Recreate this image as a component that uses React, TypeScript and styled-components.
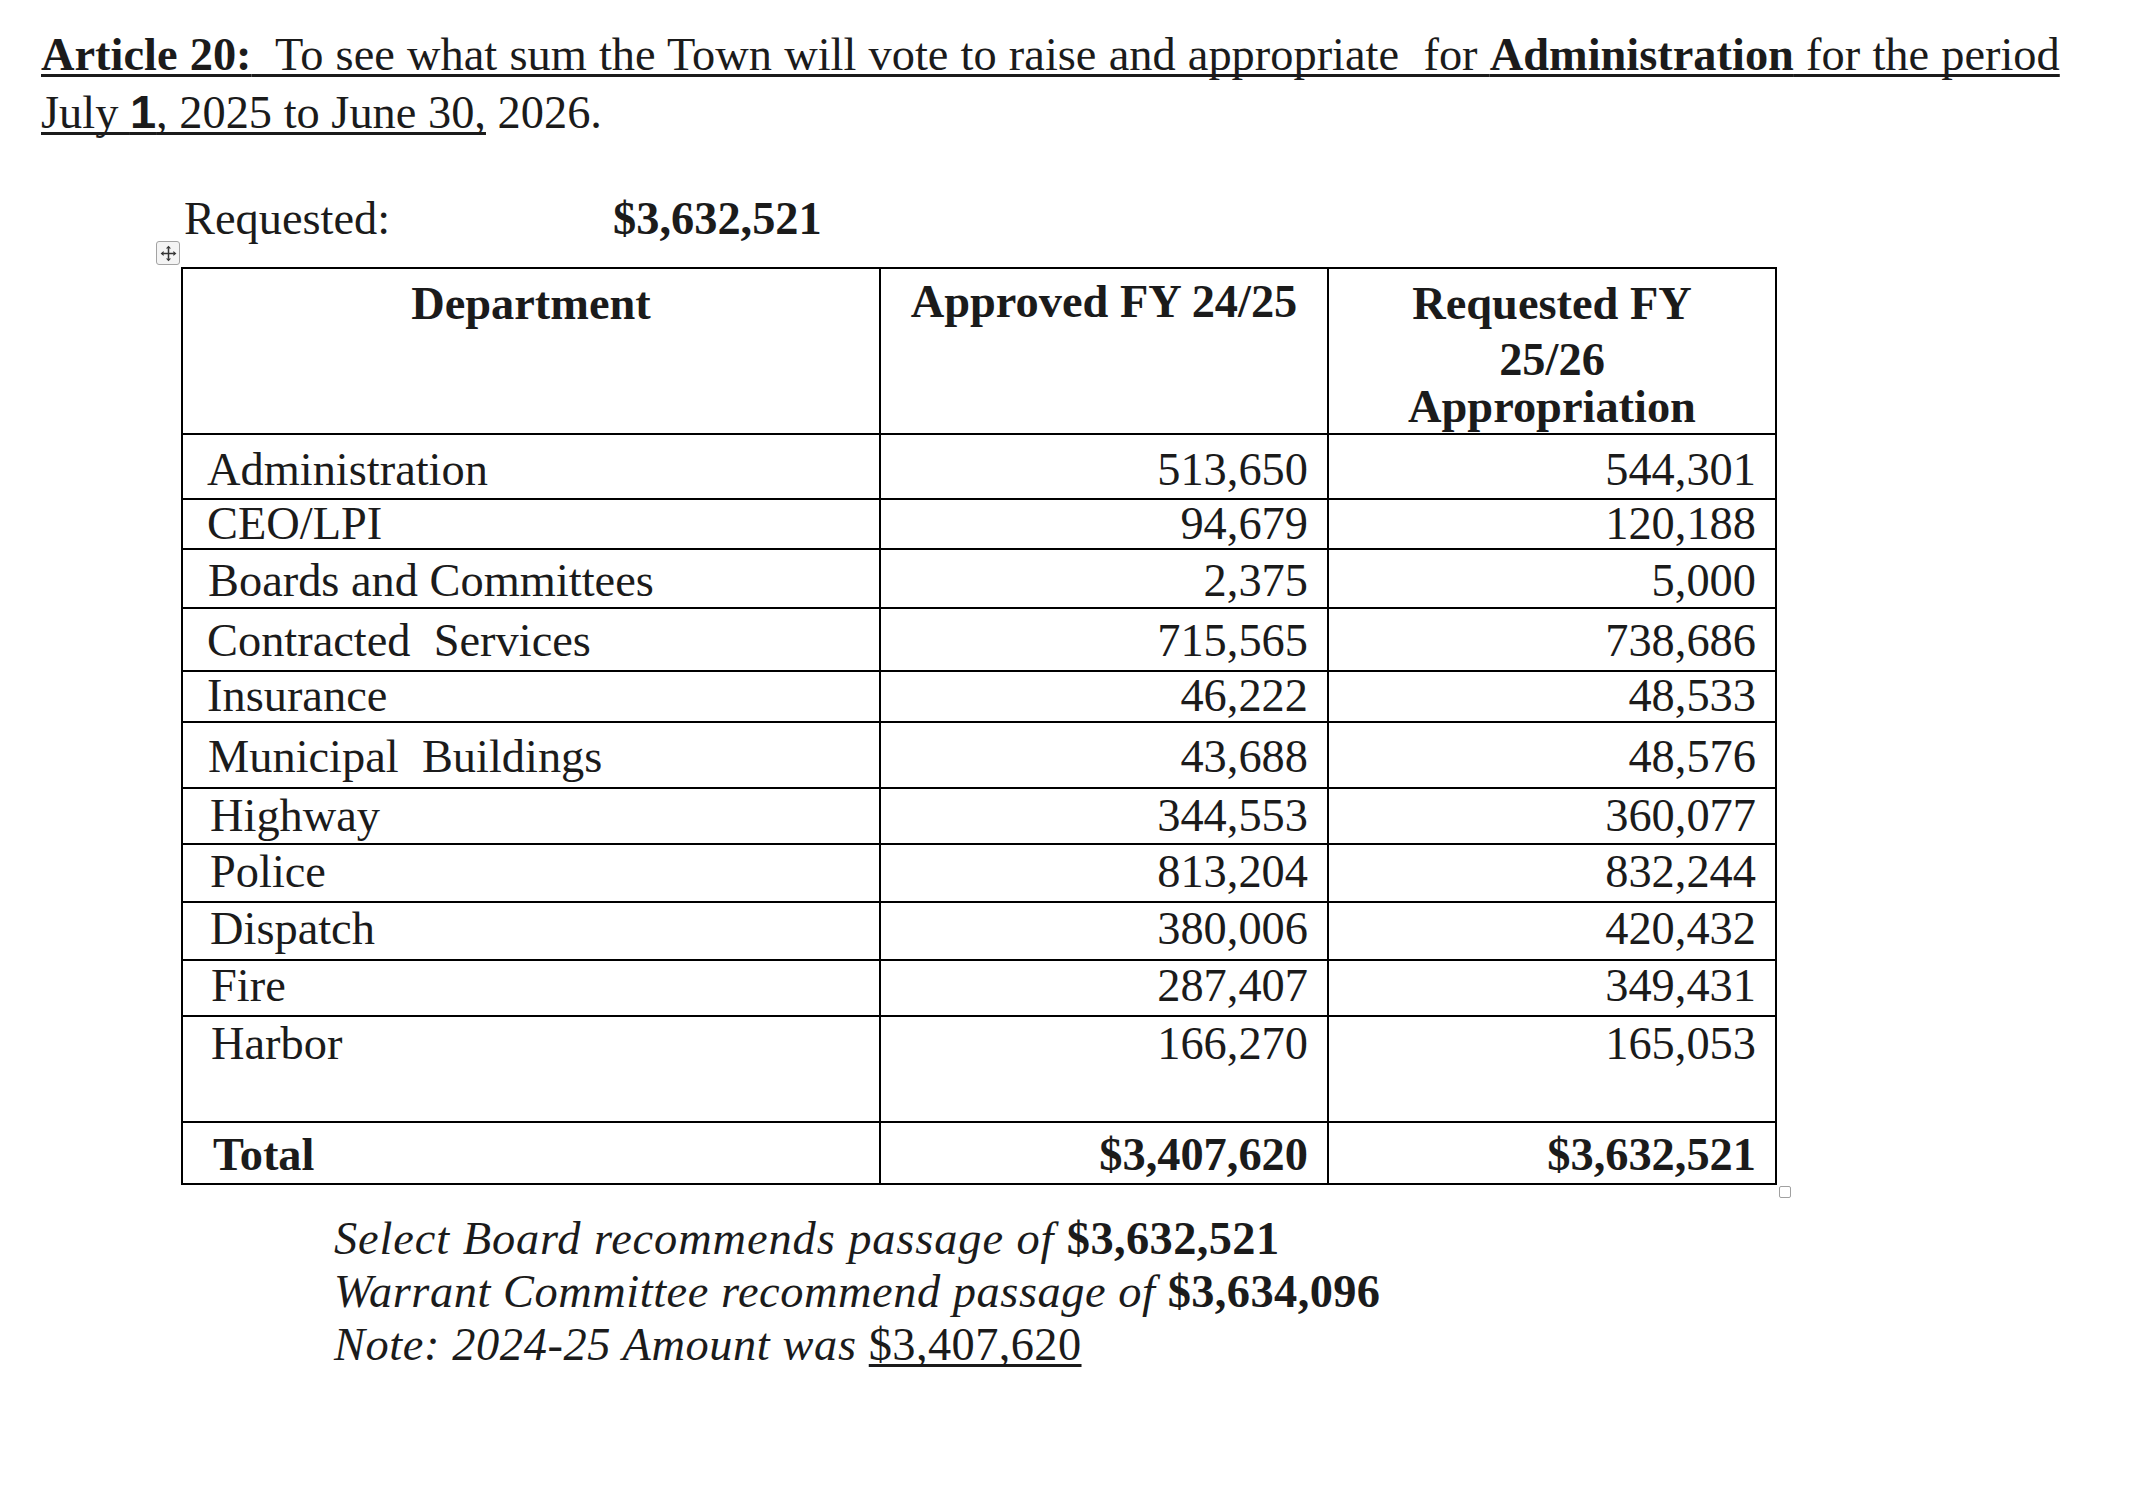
import React from "react";
import styled, { createGlobalStyle } from "styled-components";

const GlobalStyle = createGlobalStyle`
  html, body {
    margin: 0;
    padding: 0;
    background: #ffffff;
  }
  body {
    width: 2136px;
    min-height: 1488px;
    font-family: "Liberation Serif", "Times New Roman", serif;
    color: #1b1b1b;
  }
  * { box-sizing: border-box; }
`;

const Page = styled.div`
  padding: 26px 0 0 41px;
  font-family: "Liberation Serif", "Times New Roman", serif;
  font-size: 46.4px;
  color: #1b1b1b;
`;

const Heading = styled.div`
  line-height: 57px;
  white-space: pre;
`;

const Line = styled.div<{ $ws?: number }>`
  display: block;
  word-spacing: ${(p) => p.$ws ?? 0}px;
`;

const U = styled.span`
  text-decoration: underline;
  text-decoration-thickness: 3px;
  text-underline-offset: 4px;
  text-decoration-skip-ink: none;
`;

const B = styled.span`
  font-weight: 700;
`;

const SansOne = styled.span`
  font-family: "Liberation Sans", Arial, sans-serif;
  font-weight: 700;
  font-size: 47px;
`;

const RequestedRow = styled.div`
  display: flex;
  margin: 49px 0 0 143px;
  line-height: 57px;
`;

const RequestedLabel = styled.span`
  width: 429px;
`;

const TableWrap = styled.div`
  position: relative;
  margin: 20px 0 0 140px;
  width: 1596px;
`;

const Table = styled.div`
  border-left: 2px solid #000;
  border-top: 2px solid #000;
  font-size: 46.4px;
`;

const Row = styled.div<{ $h: number }>`
  display: grid;
  grid-template-columns: 698px 448px 448px;
  height: ${(p) => p.$h}px;
  border-bottom: 2px solid #000;
`;

const Cell = styled.div<{
  $pad: number;
  $align?: "left" | "right" | "center";
  $bold?: boolean;
  $indent?: number;
}>`
  border-right: 2px solid #000;
  padding-top: ${(p) => p.$pad}px;
  padding-left: ${(p) => (p.$align === "left" || !p.$align ? p.$indent ?? 24 : 0)}px;
  padding-right: ${(p) => (p.$align === "right" ? 19 : 0)}px;
  text-align: ${(p) => p.$align || "left"};
  font-weight: ${(p) => (p.$bold ? 700 : 400)};
  line-height: 46px;
  white-space: pre;
`;

const HeadLine = styled.div<{ $gap?: number }>`
  line-height: 47px;
  margin-top: ${(p) => p.$gap ?? 0}px;
`;

const MoveHandle = styled.div`
  position: absolute;
  left: -25px;
  top: -26px;
  width: 24px;
  height: 24px;
  border: 1.5px solid #a3a3a3;
  border-radius: 3px;
  background: #f4f4f4;
  display: flex;
  align-items: center;
  justify-content: center;
`;

const ResizeHandle = styled.div`
  position: absolute;
  right: -14px;
  bottom: -13px;
  width: 12px;
  height: 12px;
  border: 1.5px solid #a0a0a0;
  border-radius: 2px;
  background: #fff;
`;

const Notes = styled.div`
  margin: 27px 0 0 293px;
  line-height: 53px;
  font-style: italic;
  white-space: pre;
`;

const NoteLine = styled.div<{ $ls: number }>`
  letter-spacing: ${(p) => p.$ls}px;
`;

const Upright = styled.span<{ $bold?: boolean }>`
  font-style: normal;
  font-weight: ${(p) => (p.$bold ? 700 : 400)};
  letter-spacing: 0.4px;
`;

const UprightU = styled(Upright)`
  text-decoration: underline;
  text-decoration-thickness: 3px;
  text-underline-offset: 4px;
  text-decoration-skip-ink: none;
`;

type RowData = { label: string; a: string; r: string; h: number; pad: number; indent: number };

const rows: RowData[] = [
  { label: "Administration", a: "513,650", r: "544,301", h: 65, pad: 12, indent: 24 },
  { label: "CEO/LPI", a: "94,679", r: "120,188", h: 50, pad: 1, indent: 24 },
  { label: "Boards and Committees", a: "2,375", r: "5,000", h: 59, pad: 8, indent: 25 },
  { label: "Contracted  Services", a: "715,565", r: "738,686", h: 63, pad: 9, indent: 24 },
  { label: "Insurance", a: "46,222", r: "48,533", h: 51, pad: 1, indent: 24 },
  { label: "Municipal  Buildings", a: "43,688", r: "48,576", h: 66, pad: 11, indent: 25 },
  { label: "Highway", a: "344,553", r: "360,077", h: 56, pad: 4, indent: 27 },
  { label: "Police", a: "813,204", r: "832,244", h: 58, pad: 4, indent: 27 },
  { label: "Dispatch", a: "380,006", r: "420,432", h: 58, pad: 3, indent: 27 },
  { label: "Fire", a: "287,407", r: "349,431", h: 56, pad: 2, indent: 28 },
  { label: "Harbor", a: "166,270", r: "165,053", h: 106, pad: 4, indent: 28 },
];

const MoveIcon = () => (
  <svg width="17" height="17" viewBox="0 0 16 16" aria-hidden="true">
    <path d="M8 3 V13 M3 8 H13" stroke="#333" strokeWidth="1.4" fill="none" />
    <path d="M8 0.6 L10.4 3.4 H5.6 Z" fill="#333" />
    <path d="M8 15.4 L10.4 12.6 H5.6 Z" fill="#333" />
    <path d="M0.6 8 L3.4 5.6 V10.4 Z" fill="#333" />
    <path d="M15.4 8 L12.6 5.6 V10.4 Z" fill="#333" />
  </svg>
);

export default function App() {
  return (
    <>
      <GlobalStyle />
      <Page>
        <Heading>
          <Line $ws={0.6}>
            <U>
              <B>Article 20:</B>
              {"  To see what sum the Town will vote to raise and appropriate  for "}
              <B>Administration</B>
              {" for the period"}
            </U>
          </Line>
          <Line>
            <U>
              {"July "}
              <SansOne>1</SansOne>
              {", 2025 to June 30,"}
            </U>
            {" 2026."}
          </Line>
        </Heading>

        <RequestedRow>
          <RequestedLabel>Requested:</RequestedLabel>
          <B>$3,632,521</B>
        </RequestedRow>

        <TableWrap>
          <MoveHandle>
            <MoveIcon />
          </MoveHandle>
          <Table>
            <Row $h={166}>
              <Cell $pad={12} $align="center" $bold>
                Department
              </Cell>
              <Cell $pad={10} $align="center" $bold>
                Approved FY 24/25
              </Cell>
              <Cell $pad={11} $align="center" $bold>
                <HeadLine>Requested FY</HeadLine>
                <HeadLine $gap={9}>25/26</HeadLine>
                <HeadLine>Appropriation</HeadLine>
              </Cell>
            </Row>
            {rows.map((r) => (
              <Row key={r.label} $h={r.h}>
                <Cell $pad={r.pad} $indent={r.indent}>
                  {r.label}
                </Cell>
                <Cell $pad={r.pad} $align="right">
                  {r.a}
                </Cell>
                <Cell $pad={r.pad} $align="right">
                  {r.r}
                </Cell>
              </Row>
            ))}
            <Row $h={62}>
              <Cell $pad={9} $bold $indent={30}>
                Total
              </Cell>
              <Cell $pad={9} $align="right" $bold>
                $3,407,620
              </Cell>
              <Cell $pad={9} $align="right" $bold>
                $3,632,521
              </Cell>
            </Row>
          </Table>
          <ResizeHandle />
        </TableWrap>

        <Notes>
          <NoteLine $ls={0.9}>
            {"Select Board recommends passage of "}
            <Upright $bold>$3,632,521</Upright>
          </NoteLine>
          <NoteLine $ls={0.55}>
            {"Warrant Committee recommend passage of "}
            <Upright $bold>$3,634,096</Upright>
          </NoteLine>
          <NoteLine $ls={0.6}>
            {"Note: 2024-25 Amount was "}
            <UprightU>$3,407,620</UprightU>
          </NoteLine>
        </Notes>
      </Page>
    </>
  );
}
